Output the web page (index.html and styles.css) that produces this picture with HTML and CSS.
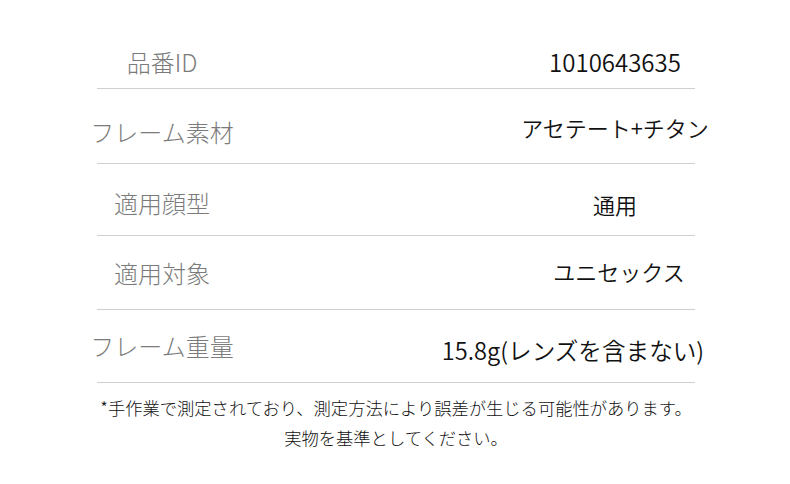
FILE: index.html
```html
<!DOCTYPE html>
<html lang="ja">
<head>
<meta charset="utf-8">
<link rel="stylesheet" href="styles.css">
</head>
<body>
<div class="spec">
  <div class="row row--first">
    <div class="label">品番ID</div>
    <div class="value value--num">1010643635</div>
  </div>
  <div class="row row--h75">
    <div class="label label--low">フレーム素材</div>
    <div class="value value--high">アセテート+チタン</div>
  </div>
  <div class="row row--h72">
    <div class="label">適用顔型</div>
    <div class="value value--low">通用</div>
  </div>
  <div class="row row--h74">
    <div class="label">適用対象</div>
    <div class="value value--high value--shift">ユニセックス</div>
  </div>
  <div class="row row--h73">
    <div class="label">フレーム重量</div>
    <div class="value value--wide">15.8g(レンズを含まない)</div>
  </div>
  <p class="note">*手作業で測定されており、測定方法により誤差が生じる可能性があります。<br>実物を基準としてください。</p>
</div>
</body>
</html>
```
FILE: styles.css
```css
html, body {
  margin: 0;
  padding: 0;
  background: #ffffff;
}
body {
  font-family: "Noto Sans CJK JP", "Noto Sans", sans-serif;
  font-weight: 300;
  width: 790px;
  height: 484px;
  overflow: hidden;
}
.spec {
  width: 598px;
  margin-left: 97px;
}
.row {
  display: flex;
  justify-content: space-between;
  align-items: center;
  border-bottom: 1px solid #cfcfcf;
  box-sizing: border-box;
}
.row--first {
  height: 89px;
  padding-top: 35px;
}
.row--h75 { height: 75px; padding-top: 6px; }
.row--h72 { height: 72px; padding-top: 6px; }
.row--h74 { height: 74px; }
.row--h73 { height: 73px; }
.label {
  width: 130px;
  display: flex;
  justify-content: center;
  white-space: nowrap;
  font-size: 24px;
  line-height: 32px;
  color: #7b7b7b;
}
.label--low { padding-top: 6px; }
.value {
  width: 160px;
  display: flex;
  justify-content: center;
  white-space: nowrap;
  font-size: 22px;
  font-weight: 350;
  line-height: 32px;
  color: #111111;
}
.value--num { font-size: 24px; }
.value--high { padding-bottom: 4px; }
.value--low { padding-top: 2px; }
.value--shift { margin-right: -4px; }
.value--wide {
  margin-right: 42px;
  font-size: 23.6px;
  padding-top: 8px;
}
.note {
  margin: 0;
  padding-top: 10px;
  text-align: center;
  font-size: 17.3px;
  line-height: 30px;
  color: #111111;
  white-space: nowrap;
}
```
